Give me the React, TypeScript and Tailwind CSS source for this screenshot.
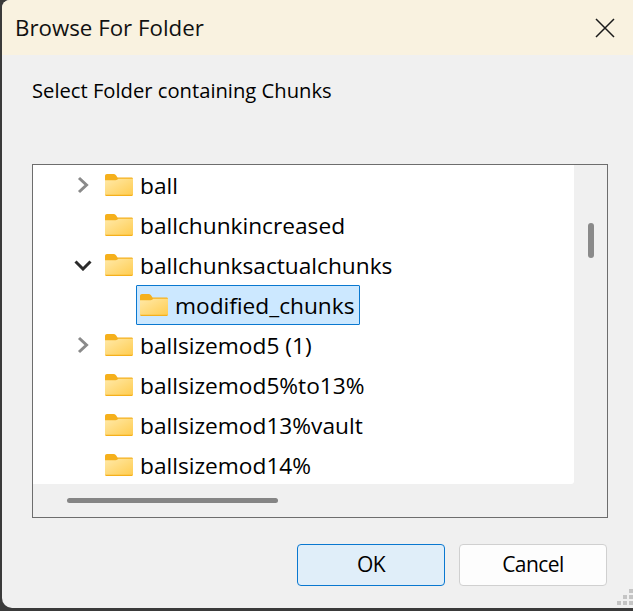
const font = { fontFamily: '"Open Sans", sans-serif' }

function Folder() {
  return (
    <svg width="28" height="22" viewBox="0 0 28 22" className="shrink-0">
      <defs>
        <linearGradient id="folderFill" x1="0" y1="0" x2="1" y2="1">
          <stop offset="0" stopColor="#ffe9a8" />
          <stop offset="1" stopColor="#ffcd52" />
        </linearGradient>
      </defs>
      <path d="M0 2C0 .8 .8 0 2 0h6.500c1 0 1.800.4 2.500 1.200L12.500 3.500H26.500c.9 0 1.500.6 1.500 1.500V20.500c0 .9-.6 1.500-1.500 1.500H1.500C.6 22 0 21.400 0 20.500z" fill="#f5b01c" />
      <path d="M0 6.300h10.500c.8 0 1.400-.2 2-.8l.7-.7H28V20.800H0z" fill="url(#folderFill)" />
    </svg>
  )
}

function Chevron({ open }: { open?: boolean }) {
  if (open) {
    return (
      <svg width="18" height="12" viewBox="0 0 18 12" fill="none">
        <path d="M1.500 2.500L9 10L16.500 2.500" stroke="#2b2b2b" strokeWidth="3" />
      </svg>
    )
  }
  return (
    <svg width="12" height="18" viewBox="0 0 12 18" fill="none">
      <path d="M2 2L9.500 9L2 16" stroke="#8a8a8a" strokeWidth="3" />
    </svg>
  )
}

function Row({ name, chevron }: { name: string; chevron?: 'open' | 'closed' }) {
  return (
    <div className="flex h-10 items-center">
      <div className="flex w-[72px] shrink-0 items-center pl-[41px]">
        <div className="flex w-[18px] justify-center">
          {chevron && <Chevron open={chevron === 'open'} />}
        </div>
      </div>
      <Folder />
      <span className="ml-[7px] whitespace-nowrap pt-[3px] text-[22.700px] text-black">{name}</span>
    </div>
  )
}

function Button({ label, primary }: { label: string; primary?: boolean }) {
  return (
    <div
      className={
        primary
          ? 'flex h-[42px] w-[148px] items-center justify-center rounded-[4px] border border-[#0a78d0] bg-[#e0eef9] text-[21px] tracking-[-0.55px] text-black'
          : 'flex h-[42px] w-[148px] items-center justify-center rounded-[4px] border border-[#d0d0d0] bg-[#fdfdfd] text-[21px] tracking-[-0.55px] text-black'
      }
    >
      {label}
    </div>
  )
}

function Grip() {
  const dots = [
    'col-start-3 row-start-1',
    'col-start-2 row-start-2',
    'col-start-3 row-start-2',
    'col-start-1 row-start-3',
    'col-start-2 row-start-3',
    'col-start-3 row-start-3',
  ]
  return (
    <div className="absolute bottom-[3px] right-0 grid grid-cols-[4px_4px_4px] grid-rows-[4px_4px_4px] gap-[2px]">
      {dots.map((d) => (
        <div key={d} className={`${d} bg-[#c4c4c4]`} />
      ))}
    </div>
  )
}

export default function App() {
  return (
    <div className="h-[611px] w-[633px] overflow-hidden bg-[#3a3a3a] pb-[3px] pl-[2px]" style={font}>
      <div className="relative flex h-[608px] flex-col overflow-hidden rounded-bl-[10px] rounded-tl-[8px] bg-[#f0f0f0]">
        <div className="flex h-[55px] shrink-0 items-center justify-between bg-[#f9f2e0] pl-[13px] pr-[18px]">
          <span className="pt-[1px] text-[22.300px] text-[#111]">Browse For Folder</span>
          <svg width="20" height="20" viewBox="0 0 20 20" fill="none" stroke="#1a1a1a" strokeWidth="1.500">
            <path d="M1 1L19 19M19 1L1 19" />
          </svg>
        </div>
        <div className="pl-[30px] pt-[21px] text-[20.200px] leading-[28px] text-black">
          Select Folder containing Chunks
        </div>
        <div className="ml-[30px] mt-[60px] flex h-[354px] w-[576px] flex-col border border-[#6d6d6d]">
          <div className="flex min-h-0 flex-1">
            <div className="flex-1 overflow-hidden rounded-br-[3px] bg-white">
              <Row name="ball" chevron="closed" />
              <Row name="ballchunkincreased" />
              <Row name="ballchunksactualchunks" chevron="open" />
              <div className="flex h-10 items-center pl-[103px]">
                <div className="flex h-10 w-[224px] items-center rounded-[1px] border border-[#0a78d0] bg-[#cce8ff] pl-[3px]">
                  <Folder />
                  <span className="ml-[7px] whitespace-nowrap pt-[3px] text-[22.700px] text-black">modified_chunks</span>
                </div>
              </div>
              <Row name="ballsizemod5 (1)" chevron="closed" />
              <Row name="ballsizemod5%to13%" />
              <Row name="ballsizemod13%vault" />
              <Row name="ballsizemod14%" />
            </div>
            <div className="w-[33px] shrink-0 pl-[14px] pt-[58px]">
              <div className="h-[35px] w-[6px] rounded-full bg-[#8a8a8a]" />
            </div>
          </div>
          <div className="h-[33px] shrink-0 pl-[34px] pt-[14px]">
            <div className="h-[5px] w-[211px] rounded-full bg-[#858585]" />
          </div>
        </div>
        <div className="mr-[26px] mt-[26px] flex justify-end gap-[14px]">
          <Button label="OK" primary />
          <Button label="Cancel" />
        </div>
        <Grip />
      </div>
    </div>
  )
}
